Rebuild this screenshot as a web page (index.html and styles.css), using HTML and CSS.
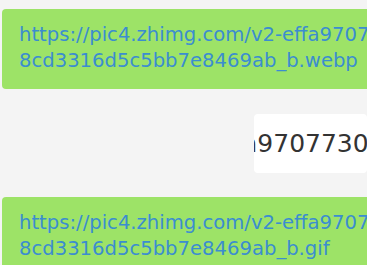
FILE: index.html
```html
<!DOCTYPE html>
<html lang="en">
<head>
    <meta charset="UTF-8">
    <meta name="viewport" content="width=device-width, initial-scale=1.0">
    <title>Chat</title>
    <link rel="stylesheet" href="styles.css">
</head>
<body>
    <div class="chat">
        <div class="msg msg-link">
            <span class="link">https://pic4.zhimg.com/v2-effa9707730e2<br>8cd3316d5c5bb7e8469ab_b.webp</span>
        </div>
        <div class="row-right">
            <div class="msg msg-plain">
                <span class="plain">a9707730e28cd</span>
            </div>
        </div>
        <div class="msg msg-link msg-last">
            <span class="link">https://pic4.zhimg.com/v2-effa9707730e2<br>8cd3316d5c5bb7e8469ab_b.gif</span>
        </div>
    </div>
</body>
</html>
```

FILE: styles.css
```css
body {
    margin: 0;
    padding: 0;
    background-color: #f4f4f4;
    font-family: "DejaVu Sans", "Open Sans", sans-serif;
}

.chat {
    width: 367px;
    height: 265px;
    overflow: hidden;
    padding-top: 9px;
    box-sizing: border-box;
}

.msg {
    border-radius: 4px;
    overflow: hidden;
    white-space: nowrap;
}

.msg-link {
    margin-left: 2px;
    width: 420px;
    height: 80px;
    box-sizing: border-box;
    padding: 13px 0 0 17px;
    background-color: #9de367;
}

.link {
    display: block;
    font-size: 19.6px;
    line-height: 26px;
    color: #3b8dd0;
}

.row-right {
    display: flex;
    margin: 25px 0 0 254px;
}

.msg-plain {
    width: 160px;
    height: 59px;
    background-color: #fff;
    display: flex;
    align-items: center;
}

.plain {
    font-size: 25px;
    color: #333;
    margin-left: -12px;
}

.msg-last {
    margin-top: 24px;
}
```
